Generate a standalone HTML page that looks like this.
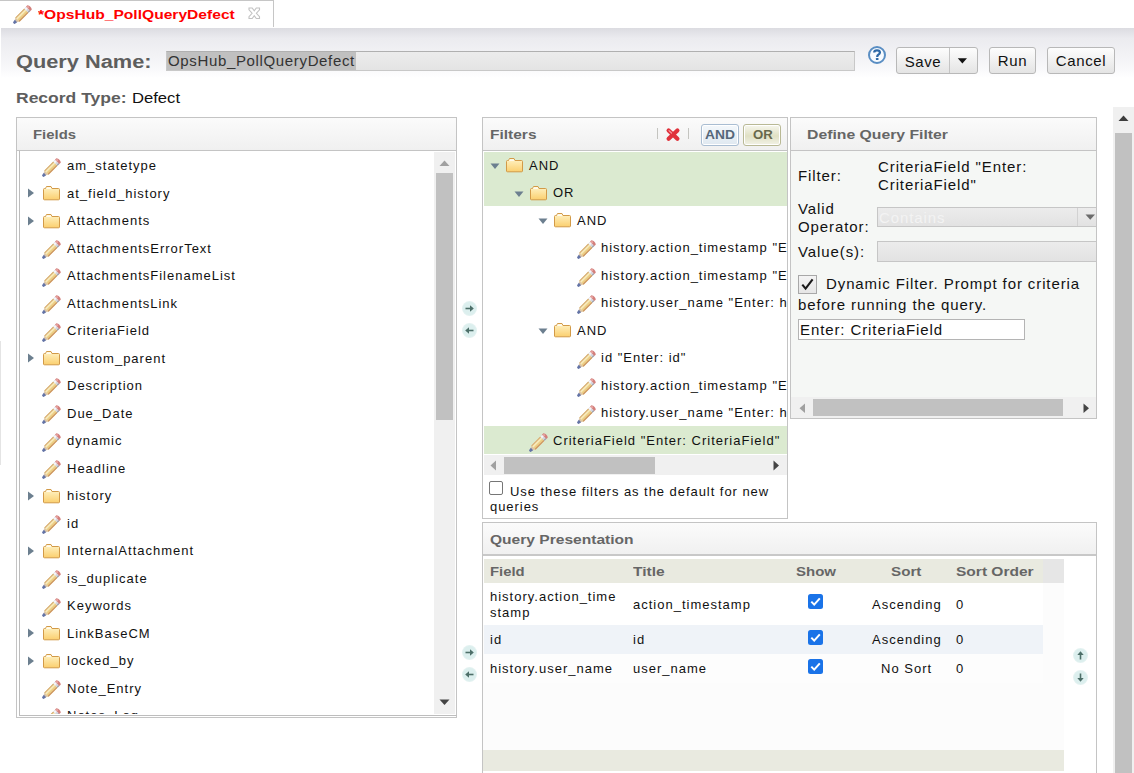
<!DOCTYPE html>
<html><head><meta charset="utf-8">
<style>
*{margin:0;padding:0;box-sizing:border-box}
html,body{width:1134px;height:773px;overflow:hidden;background:#fff;position:relative;font-family:"Liberation Sans",sans-serif;color:#111}
.a{position:absolute}
.tx{white-space:nowrap}
.hb{position:absolute;font-size:13px;line-height:16px;font-weight:bold;color:#666;white-space:nowrap;letter-spacing:0.9px}
.panel{position:absolute;border:1px solid #c4c4c4;background:#fff}
.ph{position:absolute;left:0;top:0;right:0;height:33px;border-bottom:1px solid #c4c4c4;background:linear-gradient(#fbfbfb,#f0f0f0)}
.track{position:absolute;background:#f0f0f0}
.thumb{position:absolute;background:#c1c1c1}
.btn{position:absolute;border:1px solid #b8b8b8;border-radius:3px;background:linear-gradient(#fdfdfd,#e4e4e4);font-size:15px;letter-spacing:0.6px;line-height:26px;text-align:center;color:#111}
.clip{position:absolute;overflow:hidden}
.inner{position:absolute}
.circ{position:absolute;width:15px;height:15px;border-radius:50%;background:radial-gradient(#dcefee 55%,#e9f4f3 75%,rgba(255,255,255,0) 100%)}
</style></head><body>

<!-- tab bar -->
<div class="a" style="left:0;top:0;width:274px;height:1px;background:#c6c6c6"></div>
<div class="a" style="left:273px;top:0;width:1px;height:27px;background:#c6c6c6"></div>
<svg class="a" style="left:11px;top:3px" width="23" height="23" viewBox="0 0 23 23"><g transform="rotate(-45 11.5 11.5)">
<path d="M-0.4 11.5 L4.6 8.5 L4.6 14.5 Z" fill="#dcc6aa"/>
<path d="M-1.0 10.9 Q-1.0 10.3 0 10.1 L2.3 9.9 L2.3 13.1 L0 12.9 Q-1.0 12.7 -1.0 12.1 Z" fill="#6474a6"/>
<rect x="4.4" y="8.5" width="12.6" height="6" fill="#ecce84"/>
<rect x="4.4" y="8.5" width="12.6" height="1.1" fill="#d6ae7c"/>
<rect x="4.4" y="9.8" width="12.6" height="1.7" fill="#f8eabc"/>
<rect x="4.4" y="13.3" width="12.6" height="1.2" fill="#cc9464"/>
<rect x="17" y="8.5" width="2.6" height="6" fill="#d4d6de"/>
<rect x="17" y="8.9" width="2.6" height="2.1" fill="#f6f6fa"/>
<rect x="17" y="13.3" width="2.6" height="1.2" fill="#9c9eaa"/>
<path d="M19.6 8.4 L21.6 8.4 Q23.7 11.5 21.6 14.6 L19.6 14.6 Z" fill="#d27e7a"/>
<rect x="19.6" y="9.2" width="1.9" height="1.9" fill="#eaa8a4"/>
</g></svg><div class="a tx" style="left:38px;top:7px;font-size:13px;line-height:16px;letter-spacing:0px;color:#f00;font-weight:bold;transform:scaleX(1.2);transform-origin:0 0;">*OpsHub_PollQueryDefect</div>
<svg class="a" style="left:248px;top:7px" width="13" height="13" viewBox="0 0 13 13"><path d="M1 1 L4.2 1 L6.25 3.8 L8.3 1 L11.5 1 L11.5 2.8 L8.4 6.25 L11.5 9.7 L11.5 11.5 L8.3 11.5 L6.25 8.7 L4.2 11.5 L1 11.5 L1 9.7 L4.1 6.25 L1 2.8 Z" fill="#fff" stroke="#c2c2c2" stroke-width="1.1"/></svg>

<!-- header band -->
<div class="a" style="left:1px;top:28px;width:1133px;height:50px;background:linear-gradient(#dcdce1 0px,#ebebef 10px,#f1f1f4 24px,#f8f8fa 40px,#fff 50px)"></div>
<div class="a" style="left:166px;top:51px;width:689px;height:20px;border:1px solid #c8c8c8;border-top-color:#b0b0b0;background:linear-gradient(#ececec,#e4e4e4)"></div>
<div class="a" style="left:167px;top:52px;width:189px;height:18px;background:#c0c0c0"></div>
<div class="a tx" style="left:168px;top:52px;font-size:15px;line-height:18px;color:#333;letter-spacing:0.65px">OpsHub_PollQueryDefect</div>
<!-- help -->
<svg class="a" style="left:867px;top:45px" width="20" height="20" viewBox="0 0 20 20"><circle cx="10" cy="10" r="8" fill="#f7fbff" stroke="#5a8ec3" stroke-width="2"/><path d="M7.2 7.6 Q7.2 5.3 10 5.3 Q12.9 5.3 12.9 7.5 Q12.9 8.9 11.3 9.7 Q10.2 10.3 10.2 11.9" stroke="#2d68a6" stroke-width="2.3" fill="none"/><rect x="8.9" y="12.9" width="2.6" height="2.1" rx="0.6" fill="#2d68a6"/></svg>
<div class="btn" style="left:896px;top:47px;width:82px;height:27px"></div>
<div class="a" style="left:949px;top:48px;width:1px;height:25px;background:#c4c4c4"></div>
<div class="a tx" style="left:897px;top:49px;width:52px;font-size:15px;line-height:25px;letter-spacing:0.6px;text-align:center;color:#111">Save</div>
<svg class="a" style="left:957px;top:58px" width="11" height="7"><path d="M0.8 0.3 L10 0.3 L5.4 5.4Z" fill="#111"/></svg>
<div class="btn" style="left:989px;top:47px;width:47px;height:27px">Run</div>
<div class="btn" style="left:1047px;top:47px;width:68px;height:27px">Cancel</div>

<div class="a tx" style="left:16px;top:52px;font-size:18px;line-height:21px;letter-spacing:0px;color:#5e5e5e;font-weight:bold;transform:scaleX(1.21);transform-origin:0 0;">Query Name:</div><div class="a tx" style="left:16px;top:90px;font-size:14px;line-height:17px;letter-spacing:0px;color:#5e5e5e;font-weight:bold;transform:scaleX(1.25);transform-origin:0 0;">Record Type:</div><div class="a tx" style="left:132px;top:90px;font-size:14px;line-height:17px;letter-spacing:0px;color:#111;transform:scaleX(1.187);transform-origin:0 0;">Defect</div>

<!-- right page scrollbar -->
<div class="track" style="left:1113px;top:107px;width:21px;height:666px"></div>
<svg class="a" style="left:1118px;top:115px" width="11" height="7"><path d="M0.5 6 L10.5 6 L5.5 0.5Z" fill="#3c3c3c"/></svg>
<div class="thumb" style="left:1115px;top:133px;width:17px;height:640px"></div>

<!-- left edge artifact -->
<div class="a" style="left:0;top:341px;width:1px;height:124px;background:#e4e4e4"></div>

<!-- FIELDS PANEL -->
<div class="panel" style="left:16px;top:117px;width:441px;height:601px"><div class="ph"></div></div>
<div class="a" style="left:19px;top:151px;width:1px;height:565px;background:#bdbdbd"></div>
<div class="a" style="left:19px;top:715px;width:438px;height:1px;background:#bdbdbd"></div>
<div class="track" style="left:434px;top:152px;width:21px;height:562px"></div>
<svg class="a" style="left:439px;top:160px" width="11" height="7"><path d="M0.5 6 L10.5 6 L5.5 0.5Z" fill="#a0a0a0"/></svg>
<div class="thumb" style="left:436px;top:173px;width:17px;height:247px"></div>
<svg class="a" style="left:439px;top:699px" width="11" height="7"><path d="M0.5 0.5 L10.5 0.5 L5.5 6Z" fill="#444"/></svg>
<div class="clip" style="left:20px;top:152px;width:414px;height:562px"><div class="inner" style="left:-20px;top:-152px;width:1134px;height:773px">
<svg class="a" style="left:40px;top:156px" width="23" height="23" viewBox="0 0 23 23"><g transform="rotate(-45 11.5 11.5)">
<path d="M-0.4 11.5 L4.6 8.5 L4.6 14.5 Z" fill="#dcc6aa"/>
<path d="M-1.0 10.9 Q-1.0 10.3 0 10.1 L2.3 9.9 L2.3 13.1 L0 12.9 Q-1.0 12.7 -1.0 12.1 Z" fill="#6474a6"/>
<rect x="4.4" y="8.5" width="12.6" height="6" fill="#ecce84"/>
<rect x="4.4" y="8.5" width="12.6" height="1.1" fill="#d6ae7c"/>
<rect x="4.4" y="9.8" width="12.6" height="1.7" fill="#f8eabc"/>
<rect x="4.4" y="13.3" width="12.6" height="1.2" fill="#cc9464"/>
<rect x="17" y="8.5" width="2.6" height="6" fill="#d4d6de"/>
<rect x="17" y="8.9" width="2.6" height="2.1" fill="#f6f6fa"/>
<rect x="17" y="13.3" width="2.6" height="1.2" fill="#9c9eaa"/>
<path d="M19.6 8.4 L21.6 8.4 Q23.7 11.5 21.6 14.6 L19.6 14.6 Z" fill="#d27e7a"/>
<rect x="19.6" y="9.2" width="1.9" height="1.9" fill="#eaa8a4"/>
</g></svg>
<div class="a tx" style="left:67px;top:158px;font-size:13px;line-height:16px;letter-spacing:1.0px;color:#111;">am_statetype</div>
<svg class="a" style="left:28px;top:188px" width="7" height="10"><path d="M0 0.5 L6 5 L0 9.5Z" fill="#6c7f8f"/></svg>
<svg class="a" style="left:43px;top:186px" width="18" height="15" viewBox="0 0 18 15"><defs><linearGradient id="fg" x1="0" y1="0" x2="0" y2="1"><stop offset="0" stop-color="#fff4c8"/><stop offset="1" stop-color="#fbcf6e"/></linearGradient></defs>
<path d="M3.5 0.5 L8 0.5 L9 2.5 L15.5 2.5 Q16.5 2.5 16.5 3.5 L16.5 13 Q16.5 13.8 15.5 13.8 L1.5 13.8 Q0.5 13.8 0.5 13 L0.5 3.5 Q0.5 2.5 1.5 2.5 L2.5 2.5 Z" fill="url(#fg)" stroke="#d29a48" stroke-width="1"/>
<path d="M3.7 1.5 L7.6 1.5 L8.3 2.8 L3.2 2.8 Z" fill="#fff"/>
</svg>
<div class="a tx" style="left:67px;top:186px;font-size:13px;line-height:16px;letter-spacing:1.0px;color:#111;">at_field_history</div>
<svg class="a" style="left:28px;top:216px" width="7" height="10"><path d="M0 0.5 L6 5 L0 9.5Z" fill="#6c7f8f"/></svg>
<svg class="a" style="left:43px;top:214px" width="18" height="15" viewBox="0 0 18 15"><defs><linearGradient id="fg" x1="0" y1="0" x2="0" y2="1"><stop offset="0" stop-color="#fff4c8"/><stop offset="1" stop-color="#fbcf6e"/></linearGradient></defs>
<path d="M3.5 0.5 L8 0.5 L9 2.5 L15.5 2.5 Q16.5 2.5 16.5 3.5 L16.5 13 Q16.5 13.8 15.5 13.8 L1.5 13.8 Q0.5 13.8 0.5 13 L0.5 3.5 Q0.5 2.5 1.5 2.5 L2.5 2.5 Z" fill="url(#fg)" stroke="#d29a48" stroke-width="1"/>
<path d="M3.7 1.5 L7.6 1.5 L8.3 2.8 L3.2 2.8 Z" fill="#fff"/>
</svg>
<div class="a tx" style="left:67px;top:213px;font-size:13px;line-height:16px;letter-spacing:1.0px;color:#111;">Attachments</div>
<svg class="a" style="left:40px;top:238px" width="23" height="23" viewBox="0 0 23 23"><g transform="rotate(-45 11.5 11.5)">
<path d="M-0.4 11.5 L4.6 8.5 L4.6 14.5 Z" fill="#dcc6aa"/>
<path d="M-1.0 10.9 Q-1.0 10.3 0 10.1 L2.3 9.9 L2.3 13.1 L0 12.9 Q-1.0 12.7 -1.0 12.1 Z" fill="#6474a6"/>
<rect x="4.4" y="8.5" width="12.6" height="6" fill="#ecce84"/>
<rect x="4.4" y="8.5" width="12.6" height="1.1" fill="#d6ae7c"/>
<rect x="4.4" y="9.8" width="12.6" height="1.7" fill="#f8eabc"/>
<rect x="4.4" y="13.3" width="12.6" height="1.2" fill="#cc9464"/>
<rect x="17" y="8.5" width="2.6" height="6" fill="#d4d6de"/>
<rect x="17" y="8.9" width="2.6" height="2.1" fill="#f6f6fa"/>
<rect x="17" y="13.3" width="2.6" height="1.2" fill="#9c9eaa"/>
<path d="M19.6 8.4 L21.6 8.4 Q23.7 11.5 21.6 14.6 L19.6 14.6 Z" fill="#d27e7a"/>
<rect x="19.6" y="9.2" width="1.9" height="1.9" fill="#eaa8a4"/>
</g></svg>
<div class="a tx" style="left:67px;top:241px;font-size:13px;line-height:16px;letter-spacing:1.0px;color:#111;">AttachmentsErrorText</div>
<svg class="a" style="left:40px;top:266px" width="23" height="23" viewBox="0 0 23 23"><g transform="rotate(-45 11.5 11.5)">
<path d="M-0.4 11.5 L4.6 8.5 L4.6 14.5 Z" fill="#dcc6aa"/>
<path d="M-1.0 10.9 Q-1.0 10.3 0 10.1 L2.3 9.9 L2.3 13.1 L0 12.9 Q-1.0 12.7 -1.0 12.1 Z" fill="#6474a6"/>
<rect x="4.4" y="8.5" width="12.6" height="6" fill="#ecce84"/>
<rect x="4.4" y="8.5" width="12.6" height="1.1" fill="#d6ae7c"/>
<rect x="4.4" y="9.8" width="12.6" height="1.7" fill="#f8eabc"/>
<rect x="4.4" y="13.3" width="12.6" height="1.2" fill="#cc9464"/>
<rect x="17" y="8.5" width="2.6" height="6" fill="#d4d6de"/>
<rect x="17" y="8.9" width="2.6" height="2.1" fill="#f6f6fa"/>
<rect x="17" y="13.3" width="2.6" height="1.2" fill="#9c9eaa"/>
<path d="M19.6 8.4 L21.6 8.4 Q23.7 11.5 21.6 14.6 L19.6 14.6 Z" fill="#d27e7a"/>
<rect x="19.6" y="9.2" width="1.9" height="1.9" fill="#eaa8a4"/>
</g></svg>
<div class="a tx" style="left:67px;top:268px;font-size:13px;line-height:16px;letter-spacing:1.0px;color:#111;">AttachmentsFilenameList</div>
<svg class="a" style="left:40px;top:293px" width="23" height="23" viewBox="0 0 23 23"><g transform="rotate(-45 11.5 11.5)">
<path d="M-0.4 11.5 L4.6 8.5 L4.6 14.5 Z" fill="#dcc6aa"/>
<path d="M-1.0 10.9 Q-1.0 10.3 0 10.1 L2.3 9.9 L2.3 13.1 L0 12.9 Q-1.0 12.7 -1.0 12.1 Z" fill="#6474a6"/>
<rect x="4.4" y="8.5" width="12.6" height="6" fill="#ecce84"/>
<rect x="4.4" y="8.5" width="12.6" height="1.1" fill="#d6ae7c"/>
<rect x="4.4" y="9.8" width="12.6" height="1.7" fill="#f8eabc"/>
<rect x="4.4" y="13.3" width="12.6" height="1.2" fill="#cc9464"/>
<rect x="17" y="8.5" width="2.6" height="6" fill="#d4d6de"/>
<rect x="17" y="8.9" width="2.6" height="2.1" fill="#f6f6fa"/>
<rect x="17" y="13.3" width="2.6" height="1.2" fill="#9c9eaa"/>
<path d="M19.6 8.4 L21.6 8.4 Q23.7 11.5 21.6 14.6 L19.6 14.6 Z" fill="#d27e7a"/>
<rect x="19.6" y="9.2" width="1.9" height="1.9" fill="#eaa8a4"/>
</g></svg>
<div class="a tx" style="left:67px;top:296px;font-size:13px;line-height:16px;letter-spacing:1.0px;color:#111;">AttachmentsLink</div>
<svg class="a" style="left:40px;top:321px" width="23" height="23" viewBox="0 0 23 23"><g transform="rotate(-45 11.5 11.5)">
<path d="M-0.4 11.5 L4.6 8.5 L4.6 14.5 Z" fill="#dcc6aa"/>
<path d="M-1.0 10.9 Q-1.0 10.3 0 10.1 L2.3 9.9 L2.3 13.1 L0 12.9 Q-1.0 12.7 -1.0 12.1 Z" fill="#6474a6"/>
<rect x="4.4" y="8.5" width="12.6" height="6" fill="#ecce84"/>
<rect x="4.4" y="8.5" width="12.6" height="1.1" fill="#d6ae7c"/>
<rect x="4.4" y="9.8" width="12.6" height="1.7" fill="#f8eabc"/>
<rect x="4.4" y="13.3" width="12.6" height="1.2" fill="#cc9464"/>
<rect x="17" y="8.5" width="2.6" height="6" fill="#d4d6de"/>
<rect x="17" y="8.9" width="2.6" height="2.1" fill="#f6f6fa"/>
<rect x="17" y="13.3" width="2.6" height="1.2" fill="#9c9eaa"/>
<path d="M19.6 8.4 L21.6 8.4 Q23.7 11.5 21.6 14.6 L19.6 14.6 Z" fill="#d27e7a"/>
<rect x="19.6" y="9.2" width="1.9" height="1.9" fill="#eaa8a4"/>
</g></svg>
<div class="a tx" style="left:67px;top:323px;font-size:13px;line-height:16px;letter-spacing:1.0px;color:#111;">CriteriaField</div>
<svg class="a" style="left:28px;top:353px" width="7" height="10"><path d="M0 0.5 L6 5 L0 9.5Z" fill="#6c7f8f"/></svg>
<svg class="a" style="left:43px;top:351px" width="18" height="15" viewBox="0 0 18 15"><defs><linearGradient id="fg" x1="0" y1="0" x2="0" y2="1"><stop offset="0" stop-color="#fff4c8"/><stop offset="1" stop-color="#fbcf6e"/></linearGradient></defs>
<path d="M3.5 0.5 L8 0.5 L9 2.5 L15.5 2.5 Q16.5 2.5 16.5 3.5 L16.5 13 Q16.5 13.8 15.5 13.8 L1.5 13.8 Q0.5 13.8 0.5 13 L0.5 3.5 Q0.5 2.5 1.5 2.5 L2.5 2.5 Z" fill="url(#fg)" stroke="#d29a48" stroke-width="1"/>
<path d="M3.7 1.5 L7.6 1.5 L8.3 2.8 L3.2 2.8 Z" fill="#fff"/>
</svg>
<div class="a tx" style="left:67px;top:351px;font-size:13px;line-height:16px;letter-spacing:1.0px;color:#111;">custom_parent</div>
<svg class="a" style="left:40px;top:376px" width="23" height="23" viewBox="0 0 23 23"><g transform="rotate(-45 11.5 11.5)">
<path d="M-0.4 11.5 L4.6 8.5 L4.6 14.5 Z" fill="#dcc6aa"/>
<path d="M-1.0 10.9 Q-1.0 10.3 0 10.1 L2.3 9.9 L2.3 13.1 L0 12.9 Q-1.0 12.7 -1.0 12.1 Z" fill="#6474a6"/>
<rect x="4.4" y="8.5" width="12.6" height="6" fill="#ecce84"/>
<rect x="4.4" y="8.5" width="12.6" height="1.1" fill="#d6ae7c"/>
<rect x="4.4" y="9.8" width="12.6" height="1.7" fill="#f8eabc"/>
<rect x="4.4" y="13.3" width="12.6" height="1.2" fill="#cc9464"/>
<rect x="17" y="8.5" width="2.6" height="6" fill="#d4d6de"/>
<rect x="17" y="8.9" width="2.6" height="2.1" fill="#f6f6fa"/>
<rect x="17" y="13.3" width="2.6" height="1.2" fill="#9c9eaa"/>
<path d="M19.6 8.4 L21.6 8.4 Q23.7 11.5 21.6 14.6 L19.6 14.6 Z" fill="#d27e7a"/>
<rect x="19.6" y="9.2" width="1.9" height="1.9" fill="#eaa8a4"/>
</g></svg>
<div class="a tx" style="left:67px;top:378px;font-size:13px;line-height:16px;letter-spacing:1.0px;color:#111;">Description</div>
<svg class="a" style="left:40px;top:403px" width="23" height="23" viewBox="0 0 23 23"><g transform="rotate(-45 11.5 11.5)">
<path d="M-0.4 11.5 L4.6 8.5 L4.6 14.5 Z" fill="#dcc6aa"/>
<path d="M-1.0 10.9 Q-1.0 10.3 0 10.1 L2.3 9.9 L2.3 13.1 L0 12.9 Q-1.0 12.7 -1.0 12.1 Z" fill="#6474a6"/>
<rect x="4.4" y="8.5" width="12.6" height="6" fill="#ecce84"/>
<rect x="4.4" y="8.5" width="12.6" height="1.1" fill="#d6ae7c"/>
<rect x="4.4" y="9.8" width="12.6" height="1.7" fill="#f8eabc"/>
<rect x="4.4" y="13.3" width="12.6" height="1.2" fill="#cc9464"/>
<rect x="17" y="8.5" width="2.6" height="6" fill="#d4d6de"/>
<rect x="17" y="8.9" width="2.6" height="2.1" fill="#f6f6fa"/>
<rect x="17" y="13.3" width="2.6" height="1.2" fill="#9c9eaa"/>
<path d="M19.6 8.4 L21.6 8.4 Q23.7 11.5 21.6 14.6 L19.6 14.6 Z" fill="#d27e7a"/>
<rect x="19.6" y="9.2" width="1.9" height="1.9" fill="#eaa8a4"/>
</g></svg>
<div class="a tx" style="left:67px;top:406px;font-size:13px;line-height:16px;letter-spacing:1.0px;color:#111;">Due_Date</div>
<svg class="a" style="left:40px;top:431px" width="23" height="23" viewBox="0 0 23 23"><g transform="rotate(-45 11.5 11.5)">
<path d="M-0.4 11.5 L4.6 8.5 L4.6 14.5 Z" fill="#dcc6aa"/>
<path d="M-1.0 10.9 Q-1.0 10.3 0 10.1 L2.3 9.9 L2.3 13.1 L0 12.9 Q-1.0 12.7 -1.0 12.1 Z" fill="#6474a6"/>
<rect x="4.4" y="8.5" width="12.6" height="6" fill="#ecce84"/>
<rect x="4.4" y="8.5" width="12.6" height="1.1" fill="#d6ae7c"/>
<rect x="4.4" y="9.8" width="12.6" height="1.7" fill="#f8eabc"/>
<rect x="4.4" y="13.3" width="12.6" height="1.2" fill="#cc9464"/>
<rect x="17" y="8.5" width="2.6" height="6" fill="#d4d6de"/>
<rect x="17" y="8.9" width="2.6" height="2.1" fill="#f6f6fa"/>
<rect x="17" y="13.3" width="2.6" height="1.2" fill="#9c9eaa"/>
<path d="M19.6 8.4 L21.6 8.4 Q23.7 11.5 21.6 14.6 L19.6 14.6 Z" fill="#d27e7a"/>
<rect x="19.6" y="9.2" width="1.9" height="1.9" fill="#eaa8a4"/>
</g></svg>
<div class="a tx" style="left:67px;top:433px;font-size:13px;line-height:16px;letter-spacing:1.0px;color:#111;">dynamic</div>
<svg class="a" style="left:40px;top:458px" width="23" height="23" viewBox="0 0 23 23"><g transform="rotate(-45 11.5 11.5)">
<path d="M-0.4 11.5 L4.6 8.5 L4.6 14.5 Z" fill="#dcc6aa"/>
<path d="M-1.0 10.9 Q-1.0 10.3 0 10.1 L2.3 9.9 L2.3 13.1 L0 12.9 Q-1.0 12.7 -1.0 12.1 Z" fill="#6474a6"/>
<rect x="4.4" y="8.5" width="12.6" height="6" fill="#ecce84"/>
<rect x="4.4" y="8.5" width="12.6" height="1.1" fill="#d6ae7c"/>
<rect x="4.4" y="9.8" width="12.6" height="1.7" fill="#f8eabc"/>
<rect x="4.4" y="13.3" width="12.6" height="1.2" fill="#cc9464"/>
<rect x="17" y="8.5" width="2.6" height="6" fill="#d4d6de"/>
<rect x="17" y="8.9" width="2.6" height="2.1" fill="#f6f6fa"/>
<rect x="17" y="13.3" width="2.6" height="1.2" fill="#9c9eaa"/>
<path d="M19.6 8.4 L21.6 8.4 Q23.7 11.5 21.6 14.6 L19.6 14.6 Z" fill="#d27e7a"/>
<rect x="19.6" y="9.2" width="1.9" height="1.9" fill="#eaa8a4"/>
</g></svg>
<div class="a tx" style="left:67px;top:461px;font-size:13px;line-height:16px;letter-spacing:1.0px;color:#111;">Headline</div>
<svg class="a" style="left:28px;top:491px" width="7" height="10"><path d="M0 0.5 L6 5 L0 9.5Z" fill="#6c7f8f"/></svg>
<svg class="a" style="left:43px;top:489px" width="18" height="15" viewBox="0 0 18 15"><defs><linearGradient id="fg" x1="0" y1="0" x2="0" y2="1"><stop offset="0" stop-color="#fff4c8"/><stop offset="1" stop-color="#fbcf6e"/></linearGradient></defs>
<path d="M3.5 0.5 L8 0.5 L9 2.5 L15.5 2.5 Q16.5 2.5 16.5 3.5 L16.5 13 Q16.5 13.8 15.5 13.8 L1.5 13.8 Q0.5 13.8 0.5 13 L0.5 3.5 Q0.5 2.5 1.5 2.5 L2.5 2.5 Z" fill="url(#fg)" stroke="#d29a48" stroke-width="1"/>
<path d="M3.7 1.5 L7.6 1.5 L8.3 2.8 L3.2 2.8 Z" fill="#fff"/>
</svg>
<div class="a tx" style="left:67px;top:488px;font-size:13px;line-height:16px;letter-spacing:1.0px;color:#111;">history</div>
<svg class="a" style="left:40px;top:513px" width="23" height="23" viewBox="0 0 23 23"><g transform="rotate(-45 11.5 11.5)">
<path d="M-0.4 11.5 L4.6 8.5 L4.6 14.5 Z" fill="#dcc6aa"/>
<path d="M-1.0 10.9 Q-1.0 10.3 0 10.1 L2.3 9.9 L2.3 13.1 L0 12.9 Q-1.0 12.7 -1.0 12.1 Z" fill="#6474a6"/>
<rect x="4.4" y="8.5" width="12.6" height="6" fill="#ecce84"/>
<rect x="4.4" y="8.5" width="12.6" height="1.1" fill="#d6ae7c"/>
<rect x="4.4" y="9.8" width="12.6" height="1.7" fill="#f8eabc"/>
<rect x="4.4" y="13.3" width="12.6" height="1.2" fill="#cc9464"/>
<rect x="17" y="8.5" width="2.6" height="6" fill="#d4d6de"/>
<rect x="17" y="8.9" width="2.6" height="2.1" fill="#f6f6fa"/>
<rect x="17" y="13.3" width="2.6" height="1.2" fill="#9c9eaa"/>
<path d="M19.6 8.4 L21.6 8.4 Q23.7 11.5 21.6 14.6 L19.6 14.6 Z" fill="#d27e7a"/>
<rect x="19.6" y="9.2" width="1.9" height="1.9" fill="#eaa8a4"/>
</g></svg>
<div class="a tx" style="left:67px;top:516px;font-size:13px;line-height:16px;letter-spacing:1.0px;color:#111;">id</div>
<svg class="a" style="left:28px;top:546px" width="7" height="10"><path d="M0 0.5 L6 5 L0 9.5Z" fill="#6c7f8f"/></svg>
<svg class="a" style="left:43px;top:544px" width="18" height="15" viewBox="0 0 18 15"><defs><linearGradient id="fg" x1="0" y1="0" x2="0" y2="1"><stop offset="0" stop-color="#fff4c8"/><stop offset="1" stop-color="#fbcf6e"/></linearGradient></defs>
<path d="M3.5 0.5 L8 0.5 L9 2.5 L15.5 2.5 Q16.5 2.5 16.5 3.5 L16.5 13 Q16.5 13.8 15.5 13.8 L1.5 13.8 Q0.5 13.8 0.5 13 L0.5 3.5 Q0.5 2.5 1.5 2.5 L2.5 2.5 Z" fill="url(#fg)" stroke="#d29a48" stroke-width="1"/>
<path d="M3.7 1.5 L7.6 1.5 L8.3 2.8 L3.2 2.8 Z" fill="#fff"/>
</svg>
<div class="a tx" style="left:67px;top:543px;font-size:13px;line-height:16px;letter-spacing:1.0px;color:#111;">InternalAttachment</div>
<svg class="a" style="left:40px;top:568px" width="23" height="23" viewBox="0 0 23 23"><g transform="rotate(-45 11.5 11.5)">
<path d="M-0.4 11.5 L4.6 8.5 L4.6 14.5 Z" fill="#dcc6aa"/>
<path d="M-1.0 10.9 Q-1.0 10.3 0 10.1 L2.3 9.9 L2.3 13.1 L0 12.9 Q-1.0 12.7 -1.0 12.1 Z" fill="#6474a6"/>
<rect x="4.4" y="8.5" width="12.6" height="6" fill="#ecce84"/>
<rect x="4.4" y="8.5" width="12.6" height="1.1" fill="#d6ae7c"/>
<rect x="4.4" y="9.8" width="12.6" height="1.7" fill="#f8eabc"/>
<rect x="4.4" y="13.3" width="12.6" height="1.2" fill="#cc9464"/>
<rect x="17" y="8.5" width="2.6" height="6" fill="#d4d6de"/>
<rect x="17" y="8.9" width="2.6" height="2.1" fill="#f6f6fa"/>
<rect x="17" y="13.3" width="2.6" height="1.2" fill="#9c9eaa"/>
<path d="M19.6 8.4 L21.6 8.4 Q23.7 11.5 21.6 14.6 L19.6 14.6 Z" fill="#d27e7a"/>
<rect x="19.6" y="9.2" width="1.9" height="1.9" fill="#eaa8a4"/>
</g></svg>
<div class="a tx" style="left:67px;top:571px;font-size:13px;line-height:16px;letter-spacing:1.0px;color:#111;">is_duplicate</div>
<svg class="a" style="left:40px;top:596px" width="23" height="23" viewBox="0 0 23 23"><g transform="rotate(-45 11.5 11.5)">
<path d="M-0.4 11.5 L4.6 8.5 L4.6 14.5 Z" fill="#dcc6aa"/>
<path d="M-1.0 10.9 Q-1.0 10.3 0 10.1 L2.3 9.9 L2.3 13.1 L0 12.9 Q-1.0 12.7 -1.0 12.1 Z" fill="#6474a6"/>
<rect x="4.4" y="8.5" width="12.6" height="6" fill="#ecce84"/>
<rect x="4.4" y="8.5" width="12.6" height="1.1" fill="#d6ae7c"/>
<rect x="4.4" y="9.8" width="12.6" height="1.7" fill="#f8eabc"/>
<rect x="4.4" y="13.3" width="12.6" height="1.2" fill="#cc9464"/>
<rect x="17" y="8.5" width="2.6" height="6" fill="#d4d6de"/>
<rect x="17" y="8.9" width="2.6" height="2.1" fill="#f6f6fa"/>
<rect x="17" y="13.3" width="2.6" height="1.2" fill="#9c9eaa"/>
<path d="M19.6 8.4 L21.6 8.4 Q23.7 11.5 21.6 14.6 L19.6 14.6 Z" fill="#d27e7a"/>
<rect x="19.6" y="9.2" width="1.9" height="1.9" fill="#eaa8a4"/>
</g></svg>
<div class="a tx" style="left:67px;top:598px;font-size:13px;line-height:16px;letter-spacing:1.0px;color:#111;">Keywords</div>
<svg class="a" style="left:28px;top:628px" width="7" height="10"><path d="M0 0.5 L6 5 L0 9.5Z" fill="#6c7f8f"/></svg>
<svg class="a" style="left:43px;top:626px" width="18" height="15" viewBox="0 0 18 15"><defs><linearGradient id="fg" x1="0" y1="0" x2="0" y2="1"><stop offset="0" stop-color="#fff4c8"/><stop offset="1" stop-color="#fbcf6e"/></linearGradient></defs>
<path d="M3.5 0.5 L8 0.5 L9 2.5 L15.5 2.5 Q16.5 2.5 16.5 3.5 L16.5 13 Q16.5 13.8 15.5 13.8 L1.5 13.8 Q0.5 13.8 0.5 13 L0.5 3.5 Q0.5 2.5 1.5 2.5 L2.5 2.5 Z" fill="url(#fg)" stroke="#d29a48" stroke-width="1"/>
<path d="M3.7 1.5 L7.6 1.5 L8.3 2.8 L3.2 2.8 Z" fill="#fff"/>
</svg>
<div class="a tx" style="left:67px;top:626px;font-size:13px;line-height:16px;letter-spacing:1.0px;color:#111;">LinkBaseCM</div>
<svg class="a" style="left:28px;top:656px" width="7" height="10"><path d="M0 0.5 L6 5 L0 9.5Z" fill="#6c7f8f"/></svg>
<svg class="a" style="left:43px;top:654px" width="18" height="15" viewBox="0 0 18 15"><defs><linearGradient id="fg" x1="0" y1="0" x2="0" y2="1"><stop offset="0" stop-color="#fff4c8"/><stop offset="1" stop-color="#fbcf6e"/></linearGradient></defs>
<path d="M3.5 0.5 L8 0.5 L9 2.5 L15.5 2.5 Q16.5 2.5 16.5 3.5 L16.5 13 Q16.5 13.8 15.5 13.8 L1.5 13.8 Q0.5 13.8 0.5 13 L0.5 3.5 Q0.5 2.5 1.5 2.5 L2.5 2.5 Z" fill="url(#fg)" stroke="#d29a48" stroke-width="1"/>
<path d="M3.7 1.5 L7.6 1.5 L8.3 2.8 L3.2 2.8 Z" fill="#fff"/>
</svg>
<div class="a tx" style="left:67px;top:653px;font-size:13px;line-height:16px;letter-spacing:1.0px;color:#111;">locked_by</div>
<svg class="a" style="left:40px;top:678px" width="23" height="23" viewBox="0 0 23 23"><g transform="rotate(-45 11.5 11.5)">
<path d="M-0.4 11.5 L4.6 8.5 L4.6 14.5 Z" fill="#dcc6aa"/>
<path d="M-1.0 10.9 Q-1.0 10.3 0 10.1 L2.3 9.9 L2.3 13.1 L0 12.9 Q-1.0 12.7 -1.0 12.1 Z" fill="#6474a6"/>
<rect x="4.4" y="8.5" width="12.6" height="6" fill="#ecce84"/>
<rect x="4.4" y="8.5" width="12.6" height="1.1" fill="#d6ae7c"/>
<rect x="4.4" y="9.8" width="12.6" height="1.7" fill="#f8eabc"/>
<rect x="4.4" y="13.3" width="12.6" height="1.2" fill="#cc9464"/>
<rect x="17" y="8.5" width="2.6" height="6" fill="#d4d6de"/>
<rect x="17" y="8.9" width="2.6" height="2.1" fill="#f6f6fa"/>
<rect x="17" y="13.3" width="2.6" height="1.2" fill="#9c9eaa"/>
<path d="M19.6 8.4 L21.6 8.4 Q23.7 11.5 21.6 14.6 L19.6 14.6 Z" fill="#d27e7a"/>
<rect x="19.6" y="9.2" width="1.9" height="1.9" fill="#eaa8a4"/>
</g></svg>
<div class="a tx" style="left:67px;top:681px;font-size:13px;line-height:16px;letter-spacing:1.0px;color:#111;">Note_Entry</div>
<svg class="a" style="left:40px;top:706px" width="23" height="23" viewBox="0 0 23 23"><g transform="rotate(-45 11.5 11.5)">
<path d="M-0.4 11.5 L4.6 8.5 L4.6 14.5 Z" fill="#dcc6aa"/>
<path d="M-1.0 10.9 Q-1.0 10.3 0 10.1 L2.3 9.9 L2.3 13.1 L0 12.9 Q-1.0 12.7 -1.0 12.1 Z" fill="#6474a6"/>
<rect x="4.4" y="8.5" width="12.6" height="6" fill="#ecce84"/>
<rect x="4.4" y="8.5" width="12.6" height="1.1" fill="#d6ae7c"/>
<rect x="4.4" y="9.8" width="12.6" height="1.7" fill="#f8eabc"/>
<rect x="4.4" y="13.3" width="12.6" height="1.2" fill="#cc9464"/>
<rect x="17" y="8.5" width="2.6" height="6" fill="#d4d6de"/>
<rect x="17" y="8.9" width="2.6" height="2.1" fill="#f6f6fa"/>
<rect x="17" y="13.3" width="2.6" height="1.2" fill="#9c9eaa"/>
<path d="M19.6 8.4 L21.6 8.4 Q23.7 11.5 21.6 14.6 L19.6 14.6 Z" fill="#d27e7a"/>
<rect x="19.6" y="9.2" width="1.9" height="1.9" fill="#eaa8a4"/>
</g></svg>
<div class="a tx" style="left:67px;top:708px;font-size:13px;line-height:16px;letter-spacing:1.0px;color:#111;">Notes_Log</div>
</div></div>

<!-- move arrows -->
<div class="circ" style="left:462px;top:301px"></div>
<svg class="a" style="left:462px;top:301px" width="15" height="15"><path d="M3.5 7.5 L10 7.5" stroke="#4d6f69" stroke-width="1.6"/><path d="M8 4.3 L11.8 7.5 L8 10.7Z" fill="#4d6f69"/></svg>
<div class="circ" style="left:462px;top:323px"></div>
<svg class="a" style="left:462px;top:323px" width="15" height="15"><path d="M5 7.5 L11.5 7.5" stroke="#4d6f69" stroke-width="1.6"/><path d="M7 4.3 L3.2 7.5 L7 10.7Z" fill="#4d6f69"/></svg>
<div class="circ" style="left:462px;top:645px"></div>
<svg class="a" style="left:462px;top:645px" width="15" height="15"><path d="M3.5 7.5 L10 7.5" stroke="#4d6f69" stroke-width="1.6"/><path d="M8 4.3 L11.8 7.5 L8 10.7Z" fill="#4d6f69"/></svg>
<div class="circ" style="left:462px;top:667px"></div>
<svg class="a" style="left:462px;top:667px" width="15" height="15"><path d="M5 7.5 L11.5 7.5" stroke="#4d6f69" stroke-width="1.6"/><path d="M7 4.3 L3.2 7.5 L7 10.7Z" fill="#4d6f69"/></svg>

<!-- FILTERS PANEL -->
<div class="panel" style="left:482px;top:117px;width:306px;height:402px"><div class="ph"></div></div>
<div class="a" style="left:657px;top:128px;width:1px;height:11px;background:linear-gradient(90deg,#d8c0a0,#b0c8e0)"></div>
<svg class="a" style="left:665px;top:127px" width="16" height="15" viewBox="0 0 16 15"><path d="M3.6 3.4 L12.4 11.8 M12.4 3.4 L3.6 11.8" stroke="#e0323c" stroke-width="4.2" stroke-linecap="round"/><path d="M4 3.6 L6.5 6" stroke="#f59aa0" stroke-width="1.2" stroke-linecap="round"/></svg>
<div class="a" style="left:688px;top:128px;width:1px;height:11px;background:linear-gradient(90deg,#d8c0a0,#b0c8e0)"></div>
<div class="a" style="left:701px;top:124px;width:38px;height:22px;border:1px solid #a9bdd2;border-radius:3px;background:linear-gradient(#f4f8fb,#dfe8f0);box-shadow:inset 0 0 0 1px #fff"></div>
<div class="a tx" style="left:705px;top:128px;font-size:12px;line-height:14px;font-weight:bold;color:#56677a;transform:scaleX(1.15);transform-origin:0 0">AND</div>
<div class="a" style="left:743px;top:124px;width:38px;height:22px;border:1px solid #b9b995;border-radius:3px;background:linear-gradient(#f7f7ee,#e0e0c4 55%,#f2f2e6);box-shadow:inset 0 0 0 1px #fff"></div>
<div class="a tx" style="left:753px;top:128px;font-size:12px;line-height:14px;font-weight:bold;color:#68684c;transform:scaleX(1.1);transform-origin:0 0">OR</div>

<div class="a" style="left:484px;top:152px;width:303px;height:54px;background:#dbead0"></div>
<div class="a" style="left:484px;top:426px;width:303px;height:28px;background:#dbead0"></div>
<div class="clip" style="left:484px;top:152px;width:303px;height:303px"><div class="inner" style="left:-484px;top:-152px;width:1134px;height:773px">
<svg class="a" style="left:490px;top:163px" width="10" height="7"><path d="M0.5 0.5 L9.5 0.5 L5 6Z" fill="#6c7f8f"/></svg>
<svg class="a" style="left:506px;top:158px" width="18" height="15" viewBox="0 0 18 15"><defs><linearGradient id="fg" x1="0" y1="0" x2="0" y2="1"><stop offset="0" stop-color="#fff4c8"/><stop offset="1" stop-color="#fbcf6e"/></linearGradient></defs>
<path d="M3.5 0.5 L8 0.5 L9 2.5 L15.5 2.5 Q16.5 2.5 16.5 3.5 L16.5 13 Q16.5 13.8 15.5 13.8 L1.5 13.8 Q0.5 13.8 0.5 13 L0.5 3.5 Q0.5 2.5 1.5 2.5 L2.5 2.5 Z" fill="url(#fg)" stroke="#d29a48" stroke-width="1"/>
<path d="M3.7 1.5 L7.6 1.5 L8.3 2.8 L3.2 2.8 Z" fill="#fff"/>
</svg>
<div class="a tx" style="left:529px;top:158px;font-size:13px;line-height:16px;letter-spacing:1.0px;color:#111;">AND</div>
<svg class="a" style="left:514px;top:191px" width="10" height="7"><path d="M0.5 0.5 L9.5 0.5 L5 6Z" fill="#6c7f8f"/></svg>
<svg class="a" style="left:530px;top:186px" width="18" height="15" viewBox="0 0 18 15"><defs><linearGradient id="fg" x1="0" y1="0" x2="0" y2="1"><stop offset="0" stop-color="#fff4c8"/><stop offset="1" stop-color="#fbcf6e"/></linearGradient></defs>
<path d="M3.5 0.5 L8 0.5 L9 2.5 L15.5 2.5 Q16.5 2.5 16.5 3.5 L16.5 13 Q16.5 13.8 15.5 13.8 L1.5 13.8 Q0.5 13.8 0.5 13 L0.5 3.5 Q0.5 2.5 1.5 2.5 L2.5 2.5 Z" fill="url(#fg)" stroke="#d29a48" stroke-width="1"/>
<path d="M3.7 1.5 L7.6 1.5 L8.3 2.8 L3.2 2.8 Z" fill="#fff"/>
</svg>
<div class="a tx" style="left:553px;top:185px;font-size:13px;line-height:16px;letter-spacing:1.0px;color:#111;">OR</div>
<svg class="a" style="left:538px;top:218px" width="10" height="7"><path d="M0.5 0.5 L9.5 0.5 L5 6Z" fill="#6c7f8f"/></svg>
<svg class="a" style="left:554px;top:213px" width="18" height="15" viewBox="0 0 18 15"><defs><linearGradient id="fg" x1="0" y1="0" x2="0" y2="1"><stop offset="0" stop-color="#fff4c8"/><stop offset="1" stop-color="#fbcf6e"/></linearGradient></defs>
<path d="M3.5 0.5 L8 0.5 L9 2.5 L15.5 2.5 Q16.5 2.5 16.5 3.5 L16.5 13 Q16.5 13.8 15.5 13.8 L1.5 13.8 Q0.5 13.8 0.5 13 L0.5 3.5 Q0.5 2.5 1.5 2.5 L2.5 2.5 Z" fill="url(#fg)" stroke="#d29a48" stroke-width="1"/>
<path d="M3.7 1.5 L7.6 1.5 L8.3 2.8 L3.2 2.8 Z" fill="#fff"/>
</svg>
<div class="a tx" style="left:577px;top:213px;font-size:13px;line-height:16px;letter-spacing:1.0px;color:#111;">AND</div>
<svg class="a" style="left:575px;top:238px" width="23" height="23" viewBox="0 0 23 23"><g transform="rotate(-45 11.5 11.5)">
<path d="M-0.4 11.5 L4.6 8.5 L4.6 14.5 Z" fill="#dcc6aa"/>
<path d="M-1.0 10.9 Q-1.0 10.3 0 10.1 L2.3 9.9 L2.3 13.1 L0 12.9 Q-1.0 12.7 -1.0 12.1 Z" fill="#6474a6"/>
<rect x="4.4" y="8.5" width="12.6" height="6" fill="#ecce84"/>
<rect x="4.4" y="8.5" width="12.6" height="1.1" fill="#d6ae7c"/>
<rect x="4.4" y="9.8" width="12.6" height="1.7" fill="#f8eabc"/>
<rect x="4.4" y="13.3" width="12.6" height="1.2" fill="#cc9464"/>
<rect x="17" y="8.5" width="2.6" height="6" fill="#d4d6de"/>
<rect x="17" y="8.9" width="2.6" height="2.1" fill="#f6f6fa"/>
<rect x="17" y="13.3" width="2.6" height="1.2" fill="#9c9eaa"/>
<path d="M19.6 8.4 L21.6 8.4 Q23.7 11.5 21.6 14.6 L19.6 14.6 Z" fill="#d27e7a"/>
<rect x="19.6" y="9.2" width="1.9" height="1.9" fill="#eaa8a4"/>
</g></svg>
<div class="a tx" style="left:601px;top:240px;font-size:13px;line-height:16px;letter-spacing:1.0px;color:#111;">history.action_timestamp &quot;Enter: history.action_timestamp&quot;</div>
<svg class="a" style="left:575px;top:266px" width="23" height="23" viewBox="0 0 23 23"><g transform="rotate(-45 11.5 11.5)">
<path d="M-0.4 11.5 L4.6 8.5 L4.6 14.5 Z" fill="#dcc6aa"/>
<path d="M-1.0 10.9 Q-1.0 10.3 0 10.1 L2.3 9.9 L2.3 13.1 L0 12.9 Q-1.0 12.7 -1.0 12.1 Z" fill="#6474a6"/>
<rect x="4.4" y="8.5" width="12.6" height="6" fill="#ecce84"/>
<rect x="4.4" y="8.5" width="12.6" height="1.1" fill="#d6ae7c"/>
<rect x="4.4" y="9.8" width="12.6" height="1.7" fill="#f8eabc"/>
<rect x="4.4" y="13.3" width="12.6" height="1.2" fill="#cc9464"/>
<rect x="17" y="8.5" width="2.6" height="6" fill="#d4d6de"/>
<rect x="17" y="8.9" width="2.6" height="2.1" fill="#f6f6fa"/>
<rect x="17" y="13.3" width="2.6" height="1.2" fill="#9c9eaa"/>
<path d="M19.6 8.4 L21.6 8.4 Q23.7 11.5 21.6 14.6 L19.6 14.6 Z" fill="#d27e7a"/>
<rect x="19.6" y="9.2" width="1.9" height="1.9" fill="#eaa8a4"/>
</g></svg>
<div class="a tx" style="left:601px;top:268px;font-size:13px;line-height:16px;letter-spacing:1.0px;color:#111;">history.action_timestamp &quot;Enter: history.action_timestamp&quot;</div>
<svg class="a" style="left:575px;top:293px" width="23" height="23" viewBox="0 0 23 23"><g transform="rotate(-45 11.5 11.5)">
<path d="M-0.4 11.5 L4.6 8.5 L4.6 14.5 Z" fill="#dcc6aa"/>
<path d="M-1.0 10.9 Q-1.0 10.3 0 10.1 L2.3 9.9 L2.3 13.1 L0 12.9 Q-1.0 12.7 -1.0 12.1 Z" fill="#6474a6"/>
<rect x="4.4" y="8.5" width="12.6" height="6" fill="#ecce84"/>
<rect x="4.4" y="8.5" width="12.6" height="1.1" fill="#d6ae7c"/>
<rect x="4.4" y="9.8" width="12.6" height="1.7" fill="#f8eabc"/>
<rect x="4.4" y="13.3" width="12.6" height="1.2" fill="#cc9464"/>
<rect x="17" y="8.5" width="2.6" height="6" fill="#d4d6de"/>
<rect x="17" y="8.9" width="2.6" height="2.1" fill="#f6f6fa"/>
<rect x="17" y="13.3" width="2.6" height="1.2" fill="#9c9eaa"/>
<path d="M19.6 8.4 L21.6 8.4 Q23.7 11.5 21.6 14.6 L19.6 14.6 Z" fill="#d27e7a"/>
<rect x="19.6" y="9.2" width="1.9" height="1.9" fill="#eaa8a4"/>
</g></svg>
<div class="a tx" style="left:601px;top:295px;font-size:13px;line-height:16px;letter-spacing:1.0px;color:#111;">history.user_name &quot;Enter: history.user_name&quot;</div>
<svg class="a" style="left:538px;top:328px" width="10" height="7"><path d="M0.5 0.5 L9.5 0.5 L5 6Z" fill="#6c7f8f"/></svg>
<svg class="a" style="left:554px;top:323px" width="18" height="15" viewBox="0 0 18 15"><defs><linearGradient id="fg" x1="0" y1="0" x2="0" y2="1"><stop offset="0" stop-color="#fff4c8"/><stop offset="1" stop-color="#fbcf6e"/></linearGradient></defs>
<path d="M3.5 0.5 L8 0.5 L9 2.5 L15.5 2.5 Q16.5 2.5 16.5 3.5 L16.5 13 Q16.5 13.8 15.5 13.8 L1.5 13.8 Q0.5 13.8 0.5 13 L0.5 3.5 Q0.5 2.5 1.5 2.5 L2.5 2.5 Z" fill="url(#fg)" stroke="#d29a48" stroke-width="1"/>
<path d="M3.7 1.5 L7.6 1.5 L8.3 2.8 L3.2 2.8 Z" fill="#fff"/>
</svg>
<div class="a tx" style="left:577px;top:323px;font-size:13px;line-height:16px;letter-spacing:1.0px;color:#111;">AND</div>
<svg class="a" style="left:575px;top:348px" width="23" height="23" viewBox="0 0 23 23"><g transform="rotate(-45 11.5 11.5)">
<path d="M-0.4 11.5 L4.6 8.5 L4.6 14.5 Z" fill="#dcc6aa"/>
<path d="M-1.0 10.9 Q-1.0 10.3 0 10.1 L2.3 9.9 L2.3 13.1 L0 12.9 Q-1.0 12.7 -1.0 12.1 Z" fill="#6474a6"/>
<rect x="4.4" y="8.5" width="12.6" height="6" fill="#ecce84"/>
<rect x="4.4" y="8.5" width="12.6" height="1.1" fill="#d6ae7c"/>
<rect x="4.4" y="9.8" width="12.6" height="1.7" fill="#f8eabc"/>
<rect x="4.4" y="13.3" width="12.6" height="1.2" fill="#cc9464"/>
<rect x="17" y="8.5" width="2.6" height="6" fill="#d4d6de"/>
<rect x="17" y="8.9" width="2.6" height="2.1" fill="#f6f6fa"/>
<rect x="17" y="13.3" width="2.6" height="1.2" fill="#9c9eaa"/>
<path d="M19.6 8.4 L21.6 8.4 Q23.7 11.5 21.6 14.6 L19.6 14.6 Z" fill="#d27e7a"/>
<rect x="19.6" y="9.2" width="1.9" height="1.9" fill="#eaa8a4"/>
</g></svg>
<div class="a tx" style="left:601px;top:350px;font-size:13px;line-height:16px;letter-spacing:1.0px;color:#111;">id &quot;Enter: id&quot;</div>
<svg class="a" style="left:575px;top:376px" width="23" height="23" viewBox="0 0 23 23"><g transform="rotate(-45 11.5 11.5)">
<path d="M-0.4 11.5 L4.6 8.5 L4.6 14.5 Z" fill="#dcc6aa"/>
<path d="M-1.0 10.9 Q-1.0 10.3 0 10.1 L2.3 9.9 L2.3 13.1 L0 12.9 Q-1.0 12.7 -1.0 12.1 Z" fill="#6474a6"/>
<rect x="4.4" y="8.5" width="12.6" height="6" fill="#ecce84"/>
<rect x="4.4" y="8.5" width="12.6" height="1.1" fill="#d6ae7c"/>
<rect x="4.4" y="9.8" width="12.6" height="1.7" fill="#f8eabc"/>
<rect x="4.4" y="13.3" width="12.6" height="1.2" fill="#cc9464"/>
<rect x="17" y="8.5" width="2.6" height="6" fill="#d4d6de"/>
<rect x="17" y="8.9" width="2.6" height="2.1" fill="#f6f6fa"/>
<rect x="17" y="13.3" width="2.6" height="1.2" fill="#9c9eaa"/>
<path d="M19.6 8.4 L21.6 8.4 Q23.7 11.5 21.6 14.6 L19.6 14.6 Z" fill="#d27e7a"/>
<rect x="19.6" y="9.2" width="1.9" height="1.9" fill="#eaa8a4"/>
</g></svg>
<div class="a tx" style="left:601px;top:378px;font-size:13px;line-height:16px;letter-spacing:1.0px;color:#111;">history.action_timestamp &quot;Enter: history.action_timestamp&quot;</div>
<svg class="a" style="left:575px;top:403px" width="23" height="23" viewBox="0 0 23 23"><g transform="rotate(-45 11.5 11.5)">
<path d="M-0.4 11.5 L4.6 8.5 L4.6 14.5 Z" fill="#dcc6aa"/>
<path d="M-1.0 10.9 Q-1.0 10.3 0 10.1 L2.3 9.9 L2.3 13.1 L0 12.9 Q-1.0 12.7 -1.0 12.1 Z" fill="#6474a6"/>
<rect x="4.4" y="8.5" width="12.6" height="6" fill="#ecce84"/>
<rect x="4.4" y="8.5" width="12.6" height="1.1" fill="#d6ae7c"/>
<rect x="4.4" y="9.8" width="12.6" height="1.7" fill="#f8eabc"/>
<rect x="4.4" y="13.3" width="12.6" height="1.2" fill="#cc9464"/>
<rect x="17" y="8.5" width="2.6" height="6" fill="#d4d6de"/>
<rect x="17" y="8.9" width="2.6" height="2.1" fill="#f6f6fa"/>
<rect x="17" y="13.3" width="2.6" height="1.2" fill="#9c9eaa"/>
<path d="M19.6 8.4 L21.6 8.4 Q23.7 11.5 21.6 14.6 L19.6 14.6 Z" fill="#d27e7a"/>
<rect x="19.6" y="9.2" width="1.9" height="1.9" fill="#eaa8a4"/>
</g></svg>
<div class="a tx" style="left:601px;top:405px;font-size:13px;line-height:16px;letter-spacing:1.0px;color:#111;">history.user_name &quot;Enter: history.user_name&quot;</div>
<svg class="a" style="left:527px;top:431px" width="23" height="23" viewBox="0 0 23 23"><g transform="rotate(-45 11.5 11.5)">
<path d="M-0.4 11.5 L4.6 8.5 L4.6 14.5 Z" fill="#dcc6aa"/>
<path d="M-1.0 10.9 Q-1.0 10.3 0 10.1 L2.3 9.9 L2.3 13.1 L0 12.9 Q-1.0 12.7 -1.0 12.1 Z" fill="#6474a6"/>
<rect x="4.4" y="8.5" width="12.6" height="6" fill="#ecce84"/>
<rect x="4.4" y="8.5" width="12.6" height="1.1" fill="#d6ae7c"/>
<rect x="4.4" y="9.8" width="12.6" height="1.7" fill="#f8eabc"/>
<rect x="4.4" y="13.3" width="12.6" height="1.2" fill="#cc9464"/>
<rect x="17" y="8.5" width="2.6" height="6" fill="#d4d6de"/>
<rect x="17" y="8.9" width="2.6" height="2.1" fill="#f6f6fa"/>
<rect x="17" y="13.3" width="2.6" height="1.2" fill="#9c9eaa"/>
<path d="M19.6 8.4 L21.6 8.4 Q23.7 11.5 21.6 14.6 L19.6 14.6 Z" fill="#d27e7a"/>
<rect x="19.6" y="9.2" width="1.9" height="1.9" fill="#eaa8a4"/>
</g></svg>
<div class="a tx" style="left:553px;top:433px;font-size:13px;line-height:16px;letter-spacing:1.0px;color:#111;">CriteriaField &quot;Enter: CriteriaField&quot;</div>
</div></div>
<div class="track" style="left:484px;top:455px;width:303px;height:20px"></div>
<div class="thumb" style="left:504px;top:457px;width:151px;height:17px"></div>
<svg class="a" style="left:490px;top:460px" width="7" height="11"><path d="M6 0.5 L6 10.5 L0.5 5.5Z" fill="#a0a0a0"/></svg>
<svg class="a" style="left:773px;top:460px" width="7" height="11"><path d="M0.5 0.5 L0.5 10.5 L6 5.5Z" fill="#444"/></svg>
<div class="a" style="left:489px;top:481px;width:14px;height:14px;border:1px solid #767676;border-radius:2px;background:#fff"></div>
<div class="a tx" style="left:510px;top:484px;font-size:13px;line-height:16px;letter-spacing:0.95px;color:#111;">Use these filters as the default for new</div><div class="a tx" style="left:490px;top:499px;font-size:13px;line-height:16px;letter-spacing:0.95px;color:#111;">queries</div>

<!-- DQF PANEL -->
<div class="panel" style="left:790px;top:117px;width:307px;height:302px;background:#f5f7f5"><div class="ph"></div></div>
<div class="a tx" style="left:798px;top:167px;font-size:15px;line-height:18px;letter-spacing:0.9px;color:#111;">Filter:</div>
<div class="a tx" style="left:878px;top:158px;font-size:15px;line-height:18px;letter-spacing:0.9px;color:#111;">CriteriaField &quot;Enter:</div>
<div class="a tx" style="left:878px;top:176px;font-size:15px;line-height:18px;letter-spacing:0.9px;color:#111;">CriteriaField&quot;</div>
<div class="a tx" style="left:798px;top:200px;font-size:15px;line-height:18px;letter-spacing:0.9px;color:#111;">Valid</div>
<div class="a tx" style="left:798px;top:218px;font-size:15px;line-height:18px;letter-spacing:0.9px;color:#111;">Operator:</div>
<div class="a tx" style="left:798px;top:243px;font-size:15px;line-height:18px;letter-spacing:0.9px;color:#111;">Value(s):</div>
<div class="clip" style="left:791px;top:151px;width:305px;height:246px"><div class="inner" style="left:-791px;top:-151px;width:1134px;height:773px">
<div class="a" style="left:877px;top:207px;width:240px;height:20px;border:1px solid #c6c6c6;background:linear-gradient(#ececec,#e2e2e2)"></div>
<div class="a" style="left:1077px;top:208px;width:1px;height:18px;background:#d2d2d2"></div>
<svg class="a" style="left:1085px;top:214px" width="11" height="7"><path d="M0.5 0.5 L10 0.5 L5.25 5.8Z" fill="#6b6b6b"/></svg>
<div class="a tx" style="left:879px;top:209px;font-size:15px;line-height:18px;letter-spacing:0.9px;color:#f3f3f3;">Contains</div>
<div class="a" style="left:877px;top:241px;width:240px;height:21px;border:1px solid #c6c6c6;background:linear-gradient(#ececec,#e2e2e2)"></div>
</div></div>
<div class="a" style="left:798px;top:275px;width:19px;height:19px;border:1px solid #a8a8a8;background:linear-gradient(#f4f4f4,#e6e6e6)"></div>
<svg class="a" style="left:798px;top:275px" width="19" height="19"><path d="M4.3 9.6 L7.6 13.6 L14.6 4.4" stroke="#1a1a1a" stroke-width="2.1" fill="none"/></svg>
<div class="a tx" style="left:826px;top:275px;font-size:15px;line-height:18px;letter-spacing:0.9px;color:#111;">Dynamic Filter. Prompt for criteria</div>
<div class="a tx" style="left:798px;top:296px;font-size:15px;line-height:18px;letter-spacing:0.9px;color:#111;">before running the query.</div>
<div class="a" style="left:798px;top:319px;width:227px;height:21px;border:1px solid #b4b4b4;background:#fff"></div>
<div class="a tx" style="left:800px;top:321px;font-size:15px;line-height:18px;letter-spacing:0.9px;color:#111;">Enter: CriteriaField</div>
<div class="track" style="left:791px;top:397px;width:305px;height:21px"></div>
<div class="thumb" style="left:813px;top:399px;width:250px;height:17px"></div>
<svg class="a" style="left:799px;top:403px" width="7" height="11"><path d="M6 0.5 L6 10 L0.5 5.25Z" fill="#a0a0a0"/></svg>
<svg class="a" style="left:1083px;top:403px" width="7" height="11"><path d="M0.5 0.5 L0.5 10 L6 5.25Z" fill="#444"/></svg>

<!-- QP PANEL -->
<div class="panel" style="left:482px;top:522px;width:615px;height:260px"><div class="ph"></div></div>
<div class="a" style="left:483px;top:555px;width:613px;height:1px;background:#c8c8c8"></div>
<div class="a" style="left:483px;top:583px;width:581px;height:167px;background:#fcfcfc"></div>
<div class="a" style="left:483px;top:583px;width:560px;height:42px;background:#fff"></div>
<div class="a" style="left:484px;top:559px;width:559px;height:24px;background:#e9eae0"></div>
<div class="a" style="left:1043px;top:559px;width:21px;height:24px;background:#e6e6e6"></div>
<div class="a" style="left:484px;top:625px;width:559px;height:29px;background:#eff3f8"></div>
<div class="a" style="left:484px;top:654px;width:559px;height:29px;background:#fdfdfd"></div>
<div class="a" style="left:483px;top:750px;width:581px;height:21px;background:#e9eae0"></div>
<div class="a" style="left:483px;top:554px;width:613px;height:1px;background:#c8c8c8"></div>
<div class="a tx" style="left:490px;top:564px;font-size:13px;line-height:16px;letter-spacing:0px;color:#666;font-weight:bold;transform:scaleX(1.141);transform-origin:0 0;">Field</div>
<div class="a tx" style="left:633px;top:564px;font-size:13px;line-height:16px;letter-spacing:0px;color:#666;font-weight:bold;transform:scaleX(1.193);transform-origin:0 0;">Title</div>
<div class="a tx" style="left:796px;top:564px;font-size:13px;line-height:16px;letter-spacing:0px;color:#666;font-weight:bold;transform:scaleX(1.154);transform-origin:0 0;">Show</div>
<div class="a tx" style="left:891px;top:564px;font-size:13px;line-height:16px;letter-spacing:0px;color:#666;font-weight:bold;transform:scaleX(1.169);transform-origin:0 0;">Sort</div>
<div class="a tx" style="left:956px;top:564px;font-size:13px;line-height:16px;letter-spacing:0px;color:#666;font-weight:bold;transform:scaleX(1.194);transform-origin:0 0;">Sort Order</div>
<div class="a tx" style="left:490px;top:589px;font-size:13px;line-height:16px;letter-spacing:1.0px;color:#111;">history.action_time</div>
<div class="a tx" style="left:490px;top:605px;font-size:13px;line-height:16px;letter-spacing:1.0px;color:#111;">stamp</div>
<div class="a tx" style="left:633px;top:597px;font-size:13px;line-height:16px;letter-spacing:1.0px;color:#111;">action_timestamp</div>
<div class="a tx" style="left:490px;top:632px;font-size:13px;line-height:16px;letter-spacing:1.0px;color:#111;">id</div>
<div class="a tx" style="left:633px;top:632px;font-size:13px;line-height:16px;letter-spacing:1.0px;color:#111;">id</div>
<div class="a tx" style="left:490px;top:661px;font-size:13px;line-height:16px;letter-spacing:1.0px;color:#111;">history.user_name</div>
<div class="a tx" style="left:633px;top:661px;font-size:13px;line-height:16px;letter-spacing:1.0px;color:#111;">user_name</div>
<svg class="a" style="left:808px;top:594px" width="15" height="15"><rect x="0" y="0" width="15" height="15" rx="2.5" fill="#1a73e8"/><path d="M3.3 7.6 L6.2 10.6 L11.8 4.3" stroke="#fff" stroke-width="2" fill="none"/></svg>
<svg class="a" style="left:808px;top:630px" width="15" height="15"><rect x="0" y="0" width="15" height="15" rx="2.5" fill="#1a73e8"/><path d="M3.3 7.6 L6.2 10.6 L11.8 4.3" stroke="#fff" stroke-width="2" fill="none"/></svg>
<svg class="a" style="left:808px;top:659px" width="15" height="15"><rect x="0" y="0" width="15" height="15" rx="2.5" fill="#1a73e8"/><path d="M3.3 7.6 L6.2 10.6 L11.8 4.3" stroke="#fff" stroke-width="2" fill="none"/></svg>
<div class="a tx" style="left:872px;top:597px;font-size:13px;line-height:16px;letter-spacing:1.0px;color:#111;">Ascending</div>
<div class="a tx" style="left:872px;top:632px;font-size:13px;line-height:16px;letter-spacing:1.0px;color:#111;">Ascending</div>
<div class="a tx" style="left:881px;top:661px;font-size:13px;line-height:16px;letter-spacing:1.0px;color:#111;">No Sort</div>
<div class="a tx" style="left:956px;top:597px;font-size:13px;line-height:16px;letter-spacing:1.0px;color:#111;">0</div>
<div class="a tx" style="left:956px;top:632px;font-size:13px;line-height:16px;letter-spacing:1.0px;color:#111;">0</div>
<div class="a tx" style="left:956px;top:661px;font-size:13px;line-height:16px;letter-spacing:1.0px;color:#111;">0</div>
<div class="circ" style="left:1073px;top:648px"></div>
<svg class="a" style="left:1073px;top:648px" width="15" height="15"><path d="M7.5 5 L7.5 11.5" stroke="#4d6f69" stroke-width="1.6"/><path d="M4.3 7 L7.5 3.2 L10.7 7Z" fill="#4d6f69"/></svg>
<div class="circ" style="left:1073px;top:670px"></div>
<svg class="a" style="left:1073px;top:670px" width="15" height="15"><path d="M7.5 3.5 L7.5 10" stroke="#4d6f69" stroke-width="1.6"/><path d="M4.3 8 L7.5 11.8 L10.7 8Z" fill="#4d6f69"/></svg>

<div class="a tx" style="left:33px;top:127px;font-size:13px;line-height:16px;letter-spacing:0px;color:#666;font-weight:bold;transform:scaleX(1.145);transform-origin:0 0;">Fields</div><div class="a tx" style="left:490px;top:127px;font-size:13px;line-height:16px;letter-spacing:0px;color:#666;font-weight:bold;transform:scaleX(1.192);transform-origin:0 0;">Filters</div><div class="a tx" style="left:807px;top:127px;font-size:13px;line-height:16px;letter-spacing:0px;color:#666;font-weight:bold;transform:scaleX(1.212);transform-origin:0 0;">Define Query Filter</div><div class="a tx" style="left:490px;top:532px;font-size:13px;line-height:16px;letter-spacing:0px;color:#666;font-weight:bold;transform:scaleX(1.197);transform-origin:0 0;">Query Presentation</div>
</body></html>
